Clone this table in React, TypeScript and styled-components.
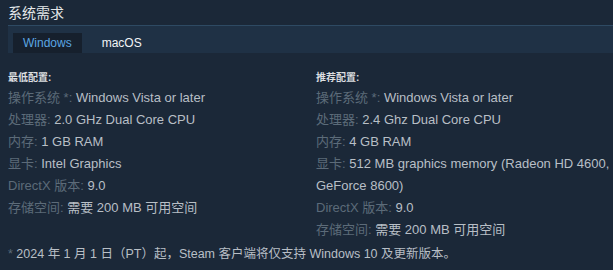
import * as React from "react";
import styled, { createGlobalStyle } from "styled-components";

const colors = {
  page: "#1b2838",
  heading: "#e5e8ea",
  rule: "#2e4a63",
  tabBar: "#1f3145",
  tabActive: "#16202d",
  tabActiveText: "#5ba7e3",
  tabText: "#f2f4f6",
  label: "#5c6b79",
  value: "#b8bfc6",
  title: "#dcdee0",
};

type Req = { label: string; value: string };

const minimum: Req[] = [
  { label: "操作系统 *:", value: "Windows Vista or later" },
  { label: "处理器:", value: "2.0 GHz Dual Core CPU" },
  { label: "内存:", value: "1 GB RAM" },
  { label: "显卡:", value: "Intel Graphics" },
  { label: "DirectX 版本:", value: "9.0" },
  { label: "存储空间:", value: "需要 200 MB 可用空间" },
];

const recommended: Req[] = [
  { label: "操作系统 *:", value: "Windows Vista or later" },
  { label: "处理器:", value: "2.4 Ghz Dual Core CPU" },
  { label: "内存:", value: "4 GB RAM" },
  { label: "显卡:", value: "512 MB graphics memory (Radeon HD 4600, GeForce 8600)" },
  { label: "DirectX 版本:", value: "9.0" },
  { label: "存储空间:", value: "需要 200 MB 可用空间" },
];

const ReqColumn: React.FC<{ title: string; items: Req[] }> = ({ title, items }) => (
  <Column>
    <ColumnTitle>{title}</ColumnTitle>
    <ReqList>
      {items.map((item) => (
        <ReqItem key={item.label}>
          <Label>{item.label}</Label> {item.value}
        </ReqItem>
      ))}
    </ReqList>
  </Column>
);

const App: React.FC = () => {
  const [tab, setTab] = React.useState("win");

  return (
    <>
      <GlobalStyle />
      <Page>
        <Heading>系统需求</Heading>
        <TabBar>
          <Tab $active={tab === "win"} onClick={() => setTab("win")}>
            Windows
          </Tab>
          <Tab $active={tab === "mac"} onClick={() => setTab("mac")}>
            macOS
          </Tab>
        </TabBar>
        <Columns>
          <ReqColumn title="最低配置:" items={minimum} />
          <ReqColumn title="推荐配置:" items={recommended} />
        </Columns>
        <Footnote>
          <Star>*</Star> 2024 年 1 月 1 日（PT）起，Steam 客户端将仅支持 Windows 10 及更新版本。
        </Footnote>
      </Page>
    </>
  );
};

const GlobalStyle = createGlobalStyle`
  html, body {
    margin: 0;
    background: ${colors.page};
  }
  body {
    font-family: "Liberation Sans", Arial, "Noto Sans CJK SC", sans-serif;
  }
`;

const Page = styled.div`
  width: 613px;
  height: 270px;
  box-sizing: border-box;
  padding-left: 8px;
  background: ${colors.page};
  overflow: hidden;
`;

const Heading = styled.h2`
  margin: 0;
  padding-top: 4px;
  height: 21px;
  font-size: 14px;
  line-height: 18px;
  font-weight: normal;
  color: ${colors.heading};
  border-bottom: 1px solid ${colors.rule};
`;

const TabBar = styled.div`
  display: flex;
  align-items: flex-end;
  gap: 10px;
  height: 27px;
  padding-left: 5px;
  background: ${colors.tabBar};
`;

const Tab = styled.div<{ $active: boolean }>`
  height: 20px;
  padding: 0 10px;
  display: flex;
  align-items: center;
  font-size: 12px;
  cursor: pointer;
  color: ${(p) => (p.$active ? colors.tabActiveText : colors.tabText)};
  background: ${(p) => (p.$active ? colors.tabActive : "transparent")};
`;

const Columns = styled.div`
  display: grid;
  grid-template-columns: 289px 1fr;
  column-gap: 19px;
  padding-top: 18px;
`;

const Column = styled.div`
  min-width: 0;
`;

const ColumnTitle = styled.div`
  font-size: 10px;
  font-weight: bold;
  line-height: 14px;
  color: ${colors.title};
  margin-bottom: 2px;
`;

const ReqList = styled.ul`
  list-style: none;
  margin: 0;
  padding: 0;
`;

const ReqItem = styled.li`
  font-size: 13px;
  line-height: 22px;
  color: ${colors.value};
`;

const Label = styled.span`
  color: ${colors.label};
`;

const Footnote = styled.p`
  margin: 4px 0 0;
  font-size: 12.5px;
  line-height: 18px;
  color: ${colors.value};
`;

const Star = styled.span`
  color: ${colors.label};
`;

export default App;
